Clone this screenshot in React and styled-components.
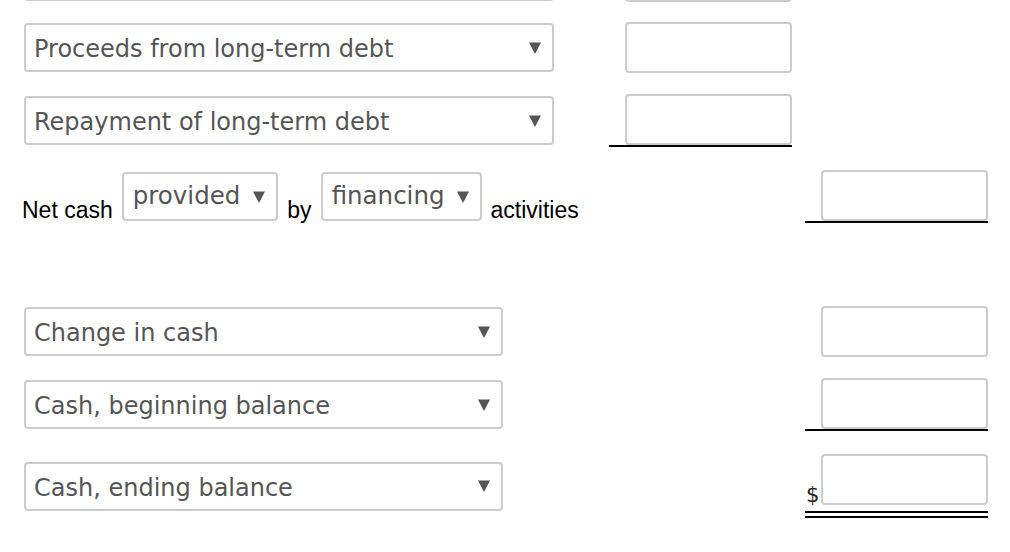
import React from 'react';
import styled, { createGlobalStyle } from 'styled-components';

const GlobalStyle = createGlobalStyle`
  body {
    margin: 0;
    background: #fff;
    font-family: "Liberation Sans", Arial, sans-serif;
  }
`;

const Sheet = styled.div`
  display: flex;
  flex-direction: column;
  padding-left: 24px;
  margin-top: -49px;
`;

const Row = styled.div`
  display: grid;
  grid-template-columns: 572px 183px 183px;
  column-gap: 13px;
  align-items: center;
  margin-top: ${(p) => p.$top || 0}px;
`;

const LabelCell = styled.div`
  grid-column: 1;
  display: flex;
  align-items: flex-end;
  gap: 9px;
`;

const Text = styled.span`
  font-family: "Liberation Sans", Arial, sans-serif;
  font-size: 23px;
  line-height: 21px;
  color: #000;
  margin-left: ${(p) => p.$shift || 0}px;
`;

const Dropdown = styled.div`
  box-sizing: border-box;
  display: flex;
  align-items: center;
  justify-content: space-between;
  gap: 13px;
  width: ${(p) => (p.$width ? `${p.$width}px` : 'auto')};
  height: 49px;
  padding: ${(p) => (p.$small ? '0 11px 0 9px' : '0 11px 0 8px')};
  border: 2px solid #cccccc;
  border-radius: 4px;
  background: #fff;
  color: #555;
  font-family: "DejaVu Sans", Verdana, sans-serif;
  font-size: ${(p) => (p.$small ? 24.5 : 24)}px;
  cursor: pointer;
`;

const Chosen = styled.span`
  white-space: nowrap;
  margin-top: ${(p) => (p.$small ? -2 : 3)}px;
`;

const Amount = styled.div`
  grid-column: ${(p) => p.$col};
  display: flex;
  align-items: flex-end;
  padding-left: 16px;
  padding-bottom: ${(p) => (p.$line === 'double' ? 6 : 0)}px;
  border-bottom: ${(p) =>
    p.$line === 'double' ? '7px double #000' : p.$line ? '2px solid #000' : 'none'};
  position: relative;
`;

const Dollar = styled.span`
  position: absolute;
  left: 1px;
  bottom: 5px;
  font-family: "DejaVu Sans", Verdana, sans-serif;
  font-size: 21px;
  line-height: 21px;
  color: #222;
`;

const Field = styled.input`
  box-sizing: border-box;
  width: 167px;
  height: 51px;
  border: 2px solid #cccccc;
  border-radius: 4px;
  background: #fff;
  outline: none;
  font-size: 20px;
  padding: 0 8px;
`;

const Arrow = () => (
  <svg width="12" height="12" viewBox="0 0 12 12" aria-hidden="true">
    <polygon points="0,0.5 12,0.5 6,12" fill="#555" />
  </svg>
);

const Select = ({ value, width, small }) => (
  <Dropdown $width={width} $small={small} role="combobox">
    <Chosen $small={small}>{value}</Chosen>
    <Arrow />
  </Dropdown>
);

const rows = [
  { top: 0, label: '', width: 530, col: 2 },
  { top: 20, label: 'Proceeds from long-term debt', width: 530, col: 2 },
  { top: 21, label: 'Repayment of long-term debt', width: 530, col: 2, line: 'single' },
];

const totals = [
  { top: 83, label: 'Change in cash' },
  { top: 21, label: 'Cash, beginning balance', line: 'single' },
  { top: 23, label: 'Cash, ending balance', line: 'double', dollar: true },
];

export default function App() {
  return (
    <>
      <GlobalStyle />
      <Sheet>
        {rows.map((r, i) => (
          <Row key={i} $top={r.top}>
            <LabelCell>
              <Select value={r.label} width={r.width} />
            </LabelCell>
            <Amount $col={r.col} $line={r.line}>
              <Field type="text" />
            </Amount>
          </Row>
        ))}

        <Row $top={23}>
          <LabelCell>
            <Text $shift={-2}>Net cash</Text>
            <Select value="provided" small />
            <Text>by</Text>
            <Select value="financing" small />
            <Text $shift={-1}>activities</Text>
          </LabelCell>
          <Amount $col={3} $line="single">
            <Field type="text" />
          </Amount>
        </Row>

        {totals.map((r) => (
          <Row key={r.label} $top={r.top}>
            <LabelCell>
              <Select value={r.label} width={479} />
            </LabelCell>
            <Amount $col={3} $line={r.line}>
              {r.dollar && <Dollar>$</Dollar>}
              <Field type="text" />
            </Amount>
          </Row>
        ))}
      </Sheet>
    </>
  );
}
